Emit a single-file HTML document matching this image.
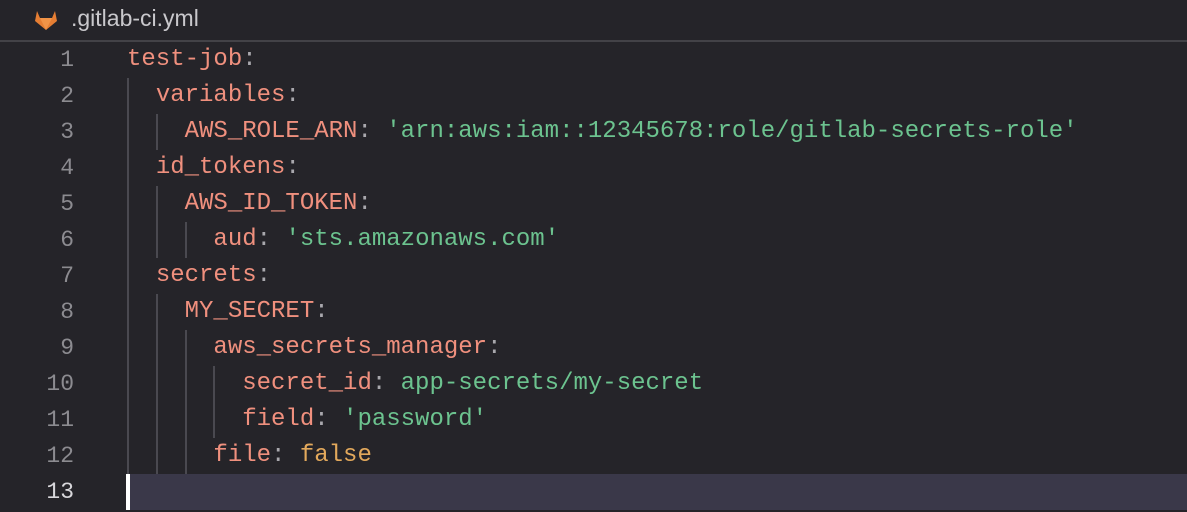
<!DOCTYPE html>
<html><head><style>
html,body{margin:0;padding:0;}
body{width:1187px;height:512px;background:#252429;overflow:hidden;position:relative;font-family:"Liberation Mono",monospace;}
.hdr{position:absolute;left:0;top:0;width:1187px;height:40px;background:#252429;border-bottom:2px solid #434247;}
.hdr span{position:absolute;left:71px;top:5px;font-family:"Liberation Sans",sans-serif;font-size:23px;color:#c9c8cc;}
.ln{position:absolute;left:0;width:74px;text-align:right;font-size:23px;color:#8c8b90;line-height:36px;}
.cl{position:absolute;left:127px;font-size:24px;line-height:36px;white-space:pre;color:#a9a8ad;}
.k{color:#f0907e}.s{color:#6cc38f}.b{color:#e3a95c}.p{color:#a9a8ad}
.g{position:absolute;width:2px;background:#4a4950;}
.hl{position:absolute;left:127px;top:474px;width:1060px;height:36px;background:#3a3849;}
.cur{position:absolute;left:126px;top:474px;width:4px;height:36px;background:#fff;}
</style></head><body>
<div class="hdr">
<svg style="position:absolute;left:34px;top:8px" width="24" height="24" viewBox="0 0 24 22"><path d="M12 21 L1 12 L3 2 L6 9 L18 9 L21 2 L23 12 Z" fill="#e67e33"/><path d="M12 21 L6 9 L18 9 Z" fill="#f29447"/></svg>
<span>.gitlab-ci.yml</span></div>
<div class="hl"></div><div class="cur"></div>
<div class="g" style="left:127px;top:78px;height:396px"></div>
<div class="g" style="left:156px;top:114px;height:36px"></div>
<div class="g" style="left:156px;top:186px;height:72px"></div>
<div class="g" style="left:185px;top:222px;height:36px"></div>
<div class="g" style="left:156px;top:294px;height:180px"></div>
<div class="g" style="left:185px;top:330px;height:144px"></div>
<div class="g" style="left:213px;top:366px;height:72px"></div>
<div class="ln" style="top:42px">1</div><div class="ln" style="top:78px">2</div><div class="ln" style="top:114px">3</div><div class="ln" style="top:150px">4</div><div class="ln" style="top:186px">5</div><div class="ln" style="top:222px">6</div><div class="ln" style="top:258px">7</div><div class="ln" style="top:294px">8</div><div class="ln" style="top:330px">9</div><div class="ln" style="top:366px">10</div><div class="ln" style="top:402px">11</div><div class="ln" style="top:438px">12</div><div class="ln" style="top:474px;color:#d8d7db">13</div>
<div class="cl" style="top:42px"><span class="k">test-job</span>:</div>
<div class="cl" style="top:78px">  <span class="k">variables</span>:</div>
<div class="cl" style="top:114px">    <span class="k">AWS_ROLE_ARN</span>: <span class="s">'arn:aws:iam::12345678:role/gitlab-secrets-role'</span></div>
<div class="cl" style="top:150px">  <span class="k">id_tokens</span>:</div>
<div class="cl" style="top:186px">    <span class="k">AWS_ID_TOKEN</span>:</div>
<div class="cl" style="top:222px">      <span class="k">aud</span>: <span class="s">'sts.amazonaws.com'</span></div>
<div class="cl" style="top:258px">  <span class="k">secrets</span>:</div>
<div class="cl" style="top:294px">    <span class="k">MY_SECRET</span>:</div>
<div class="cl" style="top:330px">      <span class="k">aws_secrets_manager</span>:</div>
<div class="cl" style="top:366px">        <span class="k">secret_id</span>: <span class="s">app-secrets/my-secret</span></div>
<div class="cl" style="top:402px">        <span class="k">field</span>: <span class="s">'password'</span></div>
<div class="cl" style="top:438px">      <span class="k">file</span>: <span class="b">false</span></div>
</body></html>
